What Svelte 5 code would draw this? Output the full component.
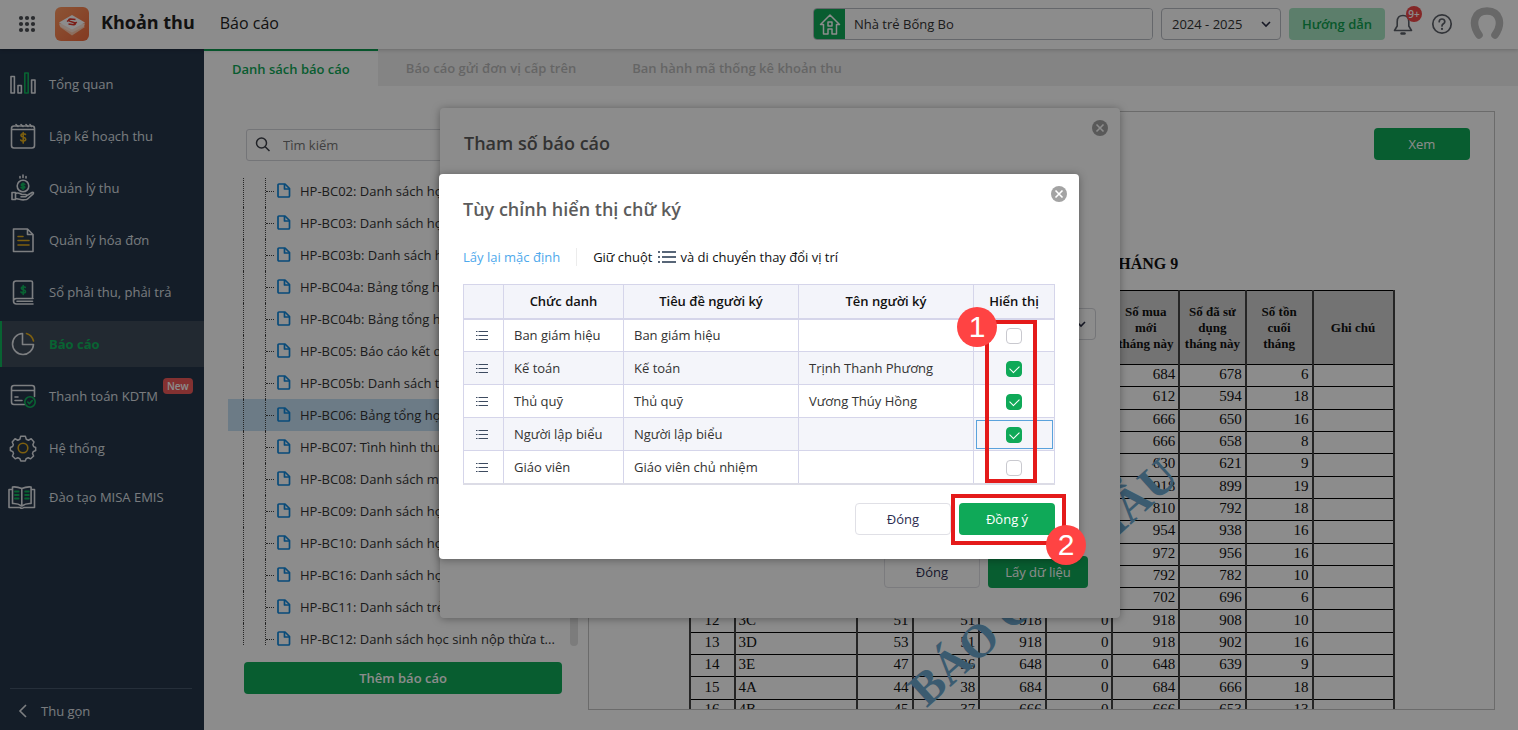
<script>
    const menu = [
        { icon: 'chart', label: 'Tổng quan' },
        { icon: 'calendar', label: 'Lập kế hoạch thu' },
        { icon: 'hand', label: 'Quản lý thu' },
        { icon: 'invoice', label: 'Quản lý hóa đơn' },
        { icon: 'ledger', label: 'Sổ phải thu, phải trả' },
        { icon: 'pie', label: 'Báo cáo', active: true },
        { icon: 'card', label: 'Thanh toán KDTM', badge: 'New' },
        { icon: 'gear', label: 'Hệ thống' },
        { icon: 'book', label: 'Đào tạo MISA EMIS' }
    ];

    const tabs = ['Danh sách báo cáo', 'Báo cáo gửi đơn vị cấp trên', 'Ban hành mã thống kê khoản thu'];

    const reports = [
        'HP-BC02: Danh sách học sinh',
        'HP-BC03: Danh sách học sinh',
        'HP-BC03b: Danh sách học sinh',
        'HP-BC04a: Bảng tổng hợp',
        'HP-BC04b: Bảng tổng hợp',
        'HP-BC05: Báo cáo kết quả thu',
        'HP-BC05b: Danh sách thu',
        'HP-BC06: Bảng tổng hợp',
        'HP-BC07: Tình hình thu',
        'HP-BC08: Danh sách miễn giảm',
        'HP-BC09: Danh sách học sinh',
        'HP-BC10: Danh sách học sinh',
        'HP-BC16: Danh sách học sinh',
        'HP-BC11: Danh sách trẻ',
        'HP-BC12: Danh sách học sinh nộp thừa t...'
    ];
    let selected = 7;

    // lop, si so, so tre, mua moi, da su dung, ton cuoi
    const usage = [
        ['1A', 40, 38, 684, 678, 6],
        ['1B', 38, 34, 612, 594, 18],
        ['1C', 40, 37, 666, 650, 16],
        ['1D', 41, 37, 666, 658, 8],
        ['2A', 39, 35, 630, 621, 9],
        ['2B', 52, 51, 918, 899, 19],
        ['2C', 47, 45, 810, 792, 18],
        ['2D', 54, 53, 954, 938, 16],
        ['2E', 55, 54, 972, 956, 16],
        ['3A', 46, 44, 792, 782, 10],
        ['3B', 42, 39, 702, 696, 6],
        ['3C', 51, 51, 918, 908, 10],
        ['3D', 53, 51, 918, 902, 16],
        ['3E', 47, 36, 648, 639, 9],
        ['4A', 44, 38, 684, 666, 18],
        ['4B', 45, 37, 666, 653, 13]
    ];

    let signers = [
        { title: 'Ban giám hiệu', header: 'Ban giám hiệu', name: '', show: false },
        { title: 'Kế toán', header: 'Kế toán', name: 'Trịnh Thanh Phương', show: true },
        { title: 'Thủ quỹ', header: 'Thủ quỹ', name: 'Vương Thúy Hồng', show: true },
        { title: 'Người lập biểu', header: 'Người lập biểu', name: '', show: true },
        { title: 'Giáo viên', header: 'Giáo viên chủ nhiệm', name: '', show: false }
    ];
    let focusedRow = 3;
</script>

<div class="page">
    <header class="topbar">
        <button class="plain apps" aria-label="Ứng dụng">
            <svg width="18" height="18" viewBox="0 0 18 18" fill="#4c4f54">
                {#each [3, 9, 15] as y}
                    {#each [3, 9, 15] as x}
                        <circle cx={x} cy={y} r="2.1" />
                    {/each}
                {/each}
            </svg>
        </button>
        <svg class="logo" width="34" height="34" viewBox="0 0 34 34">
            <defs>
                <linearGradient id="logoBg" x1="0" y1="0" x2="1" y2="1">
                    <stop offset="0" stop-color="#ff9a62" />
                    <stop offset="1" stop-color="#f0693c" />
                </linearGradient>
            </defs>
            <rect width="34" height="34" rx="6" fill="url(#logoBg)" />
            <path d="M5 20l12 8.500 13-8.500-4-2.500H9z" fill="#ffc9ab" />
            <path d="M4 16.500l1 3 12 6 12-6 1-3z" fill="#ffe4d6" />
            <path d="M4 15.500L17 8l13 7.500-13 7z" fill="#fff" />
            <path d="M20.500 12.500l-5-.4c-2 0-2.400 1.300-1 2l5 1.600c1.500.8 1 2.200-.8 2l-5.200-.6M12 14.500l3.500-2.600M18 18l3.800-2.800" fill="none" stroke="#e0352b" stroke-width="1.500" />
        </svg>
        <h1>Khoản thu</h1>
        <span class="section">Báo cáo</span>

        <label class="school">
            <span class="home">
                <svg width="24" height="24" viewBox="0 0 24 24" fill="none" stroke="#fff" stroke-width="1.500" stroke-linejoin="round">
                    <path d="M2.500 12.500L12 3l9.500 9.500H18.500V22H14v-5h-4v5H5.500v-9.500z" />
                    <rect x="10" y="10" width="4" height="4" />
                </svg>
            </span>
            <input type="text" value="Nhà trẻ Bống Bo" aria-label="Trường" />
        </label>
        <div class="year">
            <select aria-label="Năm học">
                <option>2024 - 2025</option>
            </select>
            <svg class="caret" width="10" height="7" viewBox="0 0 10 7"><path d="M1 1l4 4 4-4" fill="none" stroke="#2b2f45" stroke-width="1.600" /></svg>
        </div>
        <button class="guide">Hướng dẫn</button>
        <button class="plain bell" aria-label="Thông báo">
            <svg width="22" height="24" viewBox="0 0 22 24" fill="none" stroke="#5c6068" stroke-width="1.600" stroke-linejoin="round" stroke-linecap="round">
                <path d="M11 3.500c-4 0-5.800 2.800-5.800 6.200V14L2.500 18.500h17L16.800 14V9.700C16.800 6.300 15 3.500 11 3.500z" />
                <path d="M9.500 21.500h3" stroke-width="2.500" />
            </svg>
            <span class="count">9+</span>
        </button>
        <button class="plain help" aria-label="Trợ giúp">
            <svg width="22" height="22" viewBox="0 0 22 22" fill="none" stroke="#5c6068" stroke-width="1.700" stroke-linecap="round">
                <circle cx="11" cy="11" r="9.200" />
                <path d="M8.200 8.700c0-3.600 5.600-3.600 5.600 0 0 2.200-2.800 2-2.800 4.200" />
                <path d="M11 15.800v.2" stroke-width="2.200" />
            </svg>
        </button>
        <svg class="avatar" width="34" height="34" viewBox="0 0 34 34">
            <path d="M9 28C1 17 4 4 17 4s16 13 8 24" fill="none" stroke="#bdbdbd" stroke-width="7.500" stroke-linecap="round" />
        </svg>
    </header>

    <div class="body">
        <aside class="sidebar">
            <nav>
                {#each menu as item}
                    <a href="#{item.icon}" class="item" class:active={item.active}>
                        <svg class="glyph" width="28" height="28" viewBox="0 0 28 28" fill="none" stroke="#e4e7ec" stroke-width="1.600" stroke-linejoin="round" stroke-linecap="round">
                            {#if item.icon === 'chart'}
                                <path d="M2 6.500h3.400v16.500H2zM9 15.500h3.400V23H9zM22.600 10H26v13h-3.400z" />
                                <path d="M15.800 3h3.400v20h-3.400z" stroke="#10b45c" />
                            {:else if item.icon === 'calendar'}
                                <rect x="2.500" y="4" width="23" height="22" rx="2.500" />
                                <path d="M3 7.500h22M7 2.500l2 2M12 2.500l2 2M17 2.500l2 2M21 2.500l1.500 2" />
                                <path d="M16.500 12.500c-.6-1-4.500-1.300-4.500 1s4.700 1.400 4.700 3.700-4.200 2-5 .8M14.200 10.500v10.600" stroke="#e3ad1c" />
                            {:else if item.icon === 'hand'}
                                <circle cx="14" cy="12" r="5.800" />
                                <path d="M14 1v2.500M11 2.500v1.500M17 2.500v1.500" />
                                <path d="M3 18.500h3.500v7H3zM6.500 19.500c3-1.500 5 .5 6.500 1h3.500c1.500 0 1.500 2 0 2.200H12M18 21.500l5-3c1.200-.6 2 .4 1.200 1.300L18.500 25c-1 1-5.500 1-7 .5L6.500 24.500" />
                                <path d="M15.800 10.500c-.5-1-3.500-1-3.500.4s3.500.9 3.500 2.300-3 1.400-3.700.3M14 9v6.500" stroke="#10b45c" />
                            {:else if item.icon === 'invoice'}
                                <path d="M4.500 3h14l5.500 5.500V25.500H4.500zM18.500 3v5.500H24" />
                                <path d="M9 10.500h5M9 14.500h11M9 19h11" stroke="#e3ad1c" />
                            {:else if item.icon === 'ledger'}
                                <path d="M23.500 20.500V4.500q0-1.500-1.500-1.500H7Q4.500 3 4.500 5.500v17.500q0 3 3 3H24M24 20.500H7.500q-3 .2-3 2.500M8 23.300h15.500" />
                                <path d="M16.300 9.500c-.6-1-4-1-4 .8s4.200 1.200 4.200 3.200-3.800 1.700-4.500.5M14.200 7.500v9" stroke="#10b45c" />
                            {:else if item.icon === 'pie'}
                                <path d="M13.500 3.500A10.500 10.500 0 1 0 24.500 14.500H13.500z" />
                                <path d="M17.500 3.500c3.500 1 6 3.500 7 7.500" stroke="#e3ad1c" />
                            {:else if item.icon === 'card'}
                                <path d="M15.500 22.500H5q-2.500 0-2.500-2.500V6Q2.500 3.500 5 3.500h18q2.500 0 2.500 2.500v8.500M2.500 8.500h23M6 15h3M6 18.500h7" />
                                <circle cx="21" cy="20" r="5.200" stroke="#10b45c" />
                                <path d="M18.800 20l1.600 1.600 2.800-3" stroke="#10b45c" />
                            {:else if item.icon === 'gear'}
                                <path d="M11.500 2.500h5l1 3.200 2.300 1 3-1.600 3 3.400-1.200 3 .8 2 2.200 1v3.200l-2.600 1.200-.8 2 1.200 2.800-3.200 3-2.600-1.200-2.200 1-1 2.500h-4.800l-1-2.500-2.200-1-2.800 1.200-3-3 1.200-2.800-.8-2-2.600-1.200v-3.200l2.400-1 .8-2L2.400 8.500l3-3.400 3 1.600 2.200-1z" transform="translate(1 0) scale(.93)" />
                                <circle cx="14" cy="14" r="4.800" stroke="#e3ad1c" />
                            {:else}
                                <path d="M12.800 23V5.500Q8 3.500 3.500 4v16.500q5-.5 9.300 2.500 4.300-3 9.300-2.500V4Q17.500 3.500 12.800 5.500M3.500 6.500H0V24.500h11q2 1.500 3.800 0h10.700v-18H22" />
                                <path d="M6 8.500h3.500M6 12h3.500M6 15.500h3.500M16.200 8.500h3.500M16.200 12h3.500M16.200 15.500h3.500" stroke="#10b45c" stroke-width="2" />
                            {/if}
                        </svg>
                        <span>{item.label}</span>
                        {#if item.badge}
                            <em class="new">{item.badge}</em>
                        {/if}
                    </a>
                {/each}
            </nav>
            <button class="plain collapse">
                <svg width="10" height="14" viewBox="0 0 10 14"><path d="M8 1L2 7l6 6" fill="none" stroke="#e4e7ec" stroke-width="1.600" /></svg>
                Thu gọn
            </button>
        </aside>

        <main>
            <nav class="tabs">
                {#each tabs as tab, i}
                    <a href="#tab{i}" class:current={i === 0}>{tab}</a>
                {/each}
            </nav>

            <div class="content">
                <section class="left">
                    <label class="search">
                        <svg width="16" height="16" viewBox="0 0 16 16" fill="none" stroke="#3c3f48" stroke-width="1.500"><circle cx="6.500" cy="6" r="5" /><path d="M10.200 9.700L14.500 14" /></svg>
                        <input type="text" placeholder="Tìm kiếm" aria-label="Tìm kiếm" />
                    </label>
                    <div class="tree">
                        <ul>
                            {#each reports as report, i}
                                <li class:selected={i === selected}>
                                    <span class="guideline"></span>
                                    <span class="guideline branch"></span>
                                    <svg width="14" height="16" viewBox="0 0 14 16" fill="none" stroke="#0f88dd" stroke-width="1.700" stroke-linejoin="round">
                                        <path d="M2 1h6L12.500 5.500V13q0 1-1 1H2q-1 0-1-1V2q0-1 1-1z" />
                                        <path d="M7.500 1v5h5" />
                                    </svg>
                                    <span class="name">{report}</span>
                                </li>
                            {/each}
                        </ul>
                        <div class="track"><div class="thumb"></div></div>
                    </div>
                    <button class="green add">Thêm báo cáo</button>
                </section>

                <section class="preview">
                    <button class="green view">Xem</button>
                    <div class="sheet">
                        <h2>BẢNG TỔNG HỢP THU VÉ THÁNG 9</h2>
                        <table>
                            <colgroup>
                                <col class="c-no" /><col class="c-class" /><col class="c-size" />
                                <col /><col /><col /><col /><col /><col />
                                <col class="c-note" />
                            </colgroup>
                            <thead>
                                <tr>
                                    <th>STT</th>
                                    <th>Lớp</th>
                                    <th>Sĩ số</th>
                                    <th>Số trẻ</th>
                                    <th>Số phải mua</th>
                                    <th>Tồn đầu tháng</th>
                                    <th>Số mua<br />mới<br />tháng này</th>
                                    <th>Số đã sử<br />dụng<br />tháng này</th>
                                    <th>Số tồn<br />cuối<br />tháng</th>
                                    <th>Ghi chú</th>
                                </tr>
                            </thead>
                            <tbody>
                                {#each usage as [room, size, kids, bought, used, rest], i}
                                    <tr>
                                        <td class="mid">{i + 1}</td>
                                        <td class="start">{room}</td>
                                        <td>{size}</td>
                                        <td>{kids}</td>
                                        <td>{bought}</td>
                                        <td>0</td>
                                        <td>{bought}</td>
                                        <td>{used}</td>
                                        <td>{rest}</td>
                                        <td></td>
                                    </tr>
                                {/each}
                            </tbody>
                        </table>
                        <div class="watermark">BÁO CÁO MẪU</div>
                    </div>
                </section>
            </div>
        </main>
    </div>

    <div class="layer params">
        <div class="dialog wide" role="dialog" aria-label="Tham số báo cáo">
            <button class="plain close" aria-label="Đóng hộp thoại">
                <svg width="16" height="16" viewBox="0 0 16 16"><circle cx="8" cy="8" r="8" fill="#a3a3a3" /><path d="M4.500 4.500l7 7M11.500 4.500l-7 7" stroke="#fff" stroke-width="1.600" /></svg>
            </button>
            <h3>Tham số báo cáo</h3>
            <div class="field">
                <select aria-label="Kỳ báo cáo">
                    <option>Tháng 9</option>
                </select>
                <svg class="caret" width="10" height="7" viewBox="0 0 10 7"><path d="M1 1l4 4 4-4" fill="none" stroke="#2b2f45" stroke-width="1.600" /></svg>
            </div>
            <footer>
                <button class="white">Đóng</button>
                <button class="green fetch">Lấy dữ liệu</button>
            </footer>
        </div>
    </div>

    <div class="layer shade">
        <div class="dialog" role="dialog" aria-label="Tùy chỉnh hiển thị chữ ký">
            <button class="plain close" aria-label="Đóng hộp thoại">
                <svg width="16" height="16" viewBox="0 0 16 16"><circle cx="8" cy="8" r="8" fill="#a3a3a3" /><path d="M4.500 4.500l7 7M11.500 4.500l-7 7" stroke="#fff" stroke-width="1.600" /></svg>
            </button>
            <h3>Tùy chỉnh hiển thị chữ ký</h3>
            <div class="hint">
                <a href="#default">Lấy lại mặc định</a>
                <span class="drag">
                    Giữ chuột
                    <svg width="18" height="14" viewBox="0 0 18 14" stroke="#22344c" stroke-width="1.600"><path d="M4 2h14M4 7h14M4 12h14M0 2h2M0 7h2M0 12h2" /></svg>
                    và di chuyển thay đổi vị trí
                </span>
            </div>

            <div class="grid">
                <table>
                    <colgroup>
                        <col class="g-drag" /><col class="g-title" /><col /><col /><col class="g-show" />
                    </colgroup>
                    <thead>
                        <tr>
                            <th></th>
                            <th>Chức danh</th>
                            <th>Tiêu đề người ký</th>
                            <th>Tên người ký</th>
                            <th>Hiển thị</th>
                        </tr>
                    </thead>
                    <tbody>
                        {#each signers as signer, i}
                            <tr>
                                <td class="handle">
                                    <svg width="12" height="9" viewBox="0 0 12 9" stroke="#3d4b60" stroke-width="1"><path d="M2.500 .5h9.500M2.500 4.500h9.500M2.500 8.500h9.500M0 .5h1.500M0 4.500h1.500M0 8.500h1.500" /></svg>
                                </td>
                                <td>{signer.title}</td>
                                <td>{signer.header}</td>
                                <td>{signer.name}</td>
                                <td class="show" class:focused={i === focusedRow}>
                                    <input type="checkbox" bind:checked={signer.show} aria-label="Hiển thị {signer.title}" />
                                </td>
                            </tr>
                        {/each}
                    </tbody>
                </table>
                <div class="mark mark-column"><span class="step">1</span></div>
            </div>

            <footer>
                <button class="white">Đóng</button>
                <div class="confirm">
                    <button class="green agree">Đồng ý</button>
                    <div class="mark mark-button"><span class="step">2</span></div>
                </div>
            </footer>
        </div>
    </div>
</div>

<style>
    :global(body) {
        font-family: "Open Sans", "Noto Sans", sans-serif;
        font-size: 13px;
        color: #333;
    }

    .page, .page * {
        box-sizing: border-box;
    }

    .page {
        position: relative;
        display: flex;
        flex-direction: column;
        height: 100vh;
        overflow: hidden;
        background: #fff;
    }

    button, input, select {
        font: inherit;
        color: inherit;
    }

    button {
        cursor: pointer;
    }

    .plain {
        display: flex;
        padding: 0;
        border: none;
        background: none;
    }

    h1, h2, h3, ul {
        margin: 0;
        padding: 0;
    }

    /* top bar */
    .topbar {
        z-index: 1;
        display: flex;
        align-items: center;
        flex: none;
        height: 49px;
        padding: 0 14px 2px 18px;
        background: #fff;
        box-shadow: 0 1px 4px rgba(0, 0, 0, .2);
    }

    .logo {
        margin: 0 12px 0 19px;
    }

    h1 {
        padding-bottom: 3px;
        font-size: 18px;
        font-weight: 700;
        line-height: 24px;
        color: #222;
    }

    .section {
        flex: 1;
        margin-left: 25px;
        padding-bottom: 2px;
        font-size: 16px;
        font-weight: 500;
        color: #222;
    }

    .school {
        display: flex;
        width: 340px;
        height: 32px;
        border: 1px solid #b9bcc4;
        border-radius: 4px;
        overflow: hidden;
    }

    .home {
        display: flex;
        align-items: center;
        justify-content: center;
        width: 31px;
        background: #0fa958;
    }

    .school input {
        flex: 1;
        min-width: 0;
        padding: 0 9px;
        border: none;
        outline: none;
    }

    .year, .field {
        position: relative;
        height: 32px;
    }

    .year {
        width: 120px;
        margin: 0 8px;
    }

    .year select, .field select {
        width: 100%;
        height: 100%;
        padding: 0 10px;
        appearance: none;
        border: 1px solid #b9bcc4;
        border-radius: 4px;
        background: #fff;
    }

    .caret {
        position: absolute;
        top: 13px;
        right: 10px;
        pointer-events: none;
    }

    .guide {
        width: 96px;
        height: 32px;
        border: none;
        border-radius: 4px;
        background: #a8e6c3;
        color: #0fa04f;
        font-weight: 600;
    }

    .bell {
        position: relative;
        margin: 0 17px 0 7px;
    }

    .count {
        position: absolute;
        top: -6px;
        right: -8px;
        width: 16px;
        height: 16px;
        border-radius: 8px;
        background: #f04848;
        color: #fff;
        font-size: 10px;
        font-weight: 600;
        line-height: 16px;
        text-align: center;
    }

    .avatar {
        margin-left: 17px;
    }

    /* sidebar */
    .body {
        display: flex;
        flex: 1;
        min-height: 0;
    }

    .sidebar {
        display: flex;
        flex-direction: column;
        justify-content: space-between;
        flex: none;
        width: 204px;
        padding-top: 12px;
        background: #25354a;
    }

    .sidebar nav {
        display: flex;
        flex-direction: column;
        gap: 6px;
    }

    .item {
        display: flex;
        align-items: center;
        height: 46px;
        padding-left: 9px;
        color: #dde0e5;
        text-decoration: none;
    }

    .item:last-child {
        height: 40px;
    }

    .item.active {
        padding-left: 7px;
        border-left: 2px solid #10b45c;
        background: #3f4b5a;
        color: #10b45c;
        font-weight: 700;
    }

    .glyph {
        margin-right: 12px;
        overflow: visible;
    }

    .new {
        align-self: flex-start;
        margin: 5px 0 0 5px;
        padding: 0 4px;
        border-radius: 4px;
        background: #ee5a5a;
        color: #fff;
        font-size: 10px;
        font-style: normal;
        font-weight: 600;
        line-height: 16px;
    }

    .collapse {
        align-items: center;
        gap: 13px;
        height: 42px;
        margin: 0 12px 0 10px;
        padding: 2px 8px 0;
        border-top: 1px solid #46566a;
        color: #dde0e5;
    }

    /* main area */
    main {
        display: flex;
        flex: 1;
        flex-direction: column;
        min-width: 0;
    }

    .tabs {
        display: flex;
        flex: none;
        height: 37px;
        background: #f1f1f1;
    }

    .tabs a {
        padding: 1px 28px 0;
        color: #b9b9b9;
        font-weight: 600;
        line-height: 36px;
        text-decoration: none;
    }

    .tabs a.current {
        padding-top: 0;
        border-top: 2px solid #0fa958;
        background: #fff;
        color: #0fa958;
    }

    .content {
        display: grid;
        grid-template-columns: 350px 1fr;
        gap: 10px;
        flex: 1;
        min-height: 0;
        padding: 25px 23px 20px 24px;
    }

    .left {
        display: flex;
        flex-direction: column;
        min-height: 0;
        padding: 18px 0 16px;
    }

    .search {
        display: flex;
        align-items: center;
        flex: none;
        gap: 10px;
        height: 32px;
        margin: 0 16px 0 18px;
        padding: 0 8px;
        border: 1px solid #d3d5da;
        border-radius: 3px;
    }

    .search input {
        flex: 1;
        min-width: 0;
        border: none;
        outline: none;
    }

    .search input::placeholder {
        color: #757575;
    }

    .tree {
        display: flex;
        flex: 1;
        min-height: 0;
        margin: 17px 0 16px;
        overflow: hidden;
    }

    .tree ul {
        flex: 1;
        min-width: 0;
        margin-top: -3px;
        list-style: none;
    }

    .tree li {
        display: flex;
        align-items: center;
        height: 32px;
        padding-left: 15px;
    }

    .tree li.selected {
        background: #c5e0f5;
    }

    .guideline {
        width: 22px;
        height: 32px;
        border-left: 1px dotted #444;
    }

    .guideline.branch {
        display: flex;
        align-items: center;
        width: 11px;
        margin-right: 1px;
    }

    .guideline.branch::after {
        content: '';
        width: 8px;
        border-top: 1px dotted #444;
    }

    .name {
        margin-left: 9px;
        white-space: nowrap;
    }

    .track {
        display: flex;
        align-items: flex-end;
        width: 8px;
    }

    .thumb {
        width: 8px;
        height: 80px;
        border-radius: 4px;
        background: #e2e2e2;
    }

    .green, .white {
        width: 96px;
        height: 32px;
        border: none;
        border-radius: 4px;
        background: #0fa958;
        color: #fff;
    }

    .white {
        border: 1px solid #e0e0e6;
        background: #fff;
        color: #2b2b50;
    }

    .add {
        flex: none;
        width: auto;
        margin: 0 16px;
        font-weight: 600;
    }

    /* report preview */
    .preview {
        display: flex;
        flex-direction: column;
        min-width: 0;
        min-height: 0;
        border: 1px solid #c4c4c4;
        overflow: hidden;
    }

    .view {
        flex: none;
        align-self: flex-end;
        margin: 16px 24px 0 0;
    }

    .sheet {
        position: relative;
        align-self: center;
        flex: none;
        width: 706px;
        margin-top: 92px;
        font-family: "Liberation Serif", serif;
        color: #111;
    }

    .sheet h2 {
        margin-bottom: 15px;
        font-size: 16px;
        line-height: 23px;
        text-align: center;
        white-space: nowrap;
    }

    .sheet table {
        width: 100%;
        height: 432px;
        border-collapse: collapse;
        table-layout: fixed;
        font-size: 15px;
        line-height: 16px;
    }

    .sheet th, .sheet td {
        border: 1px solid #000;
        border-width: 1px 2px;
        border-color: #000 #444;
    }

    .sheet th {
        height: 74px;
        padding: 0 2px;
        background: #d2d2d2;
        font-size: 13px;
    }

    .sheet td {
        padding: 0 3px 3px;
        text-align: right;
    }

    .sheet .mid {
        text-align: center;
    }

    .sheet .start {
        text-align: left;
    }

    .c-no {
        width: 45px;
    }

    .c-class {
        width: 122px;
    }

    .c-size {
        width: 56px;
    }

    .c-note {
        width: 81px;
    }

    .watermark {
        position: absolute;
        left: 354px;
        top: 330px;
        color: #6ca6cc;
        font-size: 47px;
        font-weight: 700;
        line-height: 50px;
        white-space: nowrap;
        transform: translate(-50%, -50%) rotate(-42deg);
    }

    /* dialogs */
    .layer {
        position: absolute;
        inset: 0;
        z-index: 2;
        display: flex;
        align-items: flex-start;
        justify-content: center;
    }

    .params {
        padding: 108px 0 0 42px;
    }

    .shade {
        padding-top: 174px;
        background: rgba(0, 0, 0, .45);
    }

    .dialog {
        position: relative;
        width: 640px;
        padding: 20px 24px 24px;
        border-radius: 4px;
        background: #fff;
        box-shadow: 0 1px 8px rgba(0, 0, 0, .35);
    }

    .wide {
        width: 680px;
        padding-right: 32px;
        padding-bottom: 30px;
    }

    .close {
        position: absolute;
        top: 12px;
        right: 12px;
    }

    h3 {
        font-size: 18px;
        font-weight: 600;
        line-height: 30px;
        color: #5c5c5c;
    }

    .field {
        margin: 150px -8px 0 0;
    }

    .field select {
        border-color: #d3d5da;
    }

    .dialog footer {
        display: flex;
        justify-content: flex-end;
        gap: 8px;
        margin-top: 18px;
    }

    .dialog.wide footer {
        margin-top: 216px;
    }

    .fetch {
        width: 100px;
    }

    .fetch, .agree {
        font-weight: 500;
    }

    .hint {
        display: flex;
        align-items: center;
        height: 20px;
        margin: 23px 0 17px;
        color: #111;
    }

    .hint a {
        padding-right: 16px;
        border-right: 1px solid #ececec;
        color: #4fa9ec;
        text-decoration: none;
    }

    .drag {
        display: flex;
        align-items: center;
        gap: 5px;
        margin-left: 16px;
    }

    .grid {
        position: relative;
    }

    .grid table {
        width: 100%;
        border-collapse: collapse;
        table-layout: fixed;
        border-bottom: 2px solid #dcdce6;
    }

    .grid th, .grid td {
        height: 33px;
        padding: 0 10px;
        border: 1px solid #d5d5ea;
        text-align: left;
    }

    .grid th {
        height: 34px;
        padding: 0;
        border-bottom-width: 2px;
        background: #f3f4fa;
        color: #111;
        font-weight: 600;
        text-align: center;
    }

    .grid tbody tr:nth-child(even) {
        background: #f4f5fa;
    }

    .grid .handle, .grid .show {
        padding: 0;
        text-align: center;
    }

    .handle svg {
        display: block;
        margin: 1px auto 0 12px;
    }

    .show.focused {
        outline: 1px solid #5aa2dc;
        outline-offset: -3px;
    }

    .g-drag {
        width: 40px;
    }

    .g-title {
        width: 120px;
    }

    .g-show {
        width: 81px;
    }

    .show input {
        display: block;
        width: 16px;
        height: 16px;
        margin: 2px auto 0;
        appearance: none;
        border: 1px solid #c9c9cf;
        border-radius: 4px;
        background: #fff;
    }

    .show input:checked {
        border-color: #0fa958;
        background: #0fa958;
    }

    .show input:checked::after {
        content: '';
        display: block;
        width: 8px;
        height: 5px;
        margin: 3px 0 0 3px;
        border-left: 1px solid #fff;
        border-bottom: 1px solid #fff;
        transform: rotate(-45deg);
    }

    .confirm {
        position: relative;
    }

    .mark {
        position: absolute;
        border: 4px solid #e41a1a;
        pointer-events: none;
    }

    .mark-column {
        top: 36px;
        right: 18px;
        bottom: 2px;
        width: 52px;
    }

    .mark-button {
        inset: -9px -11px -10px -8px;
    }

    .step {
        position: absolute;
        width: 40px;
        height: 40px;
        border-radius: 20px;
        background: #ff4343;
        color: #fff;
        font-family: "Liberation Sans", sans-serif;
        font-size: 30px;
        line-height: 40px;
        text-align: center;
    }

    .mark-column .step {
        top: -17px;
        left: -32px;
    }

    .mark-button .step {
        right: -24px;
        bottom: -24px;
    }
</style>
